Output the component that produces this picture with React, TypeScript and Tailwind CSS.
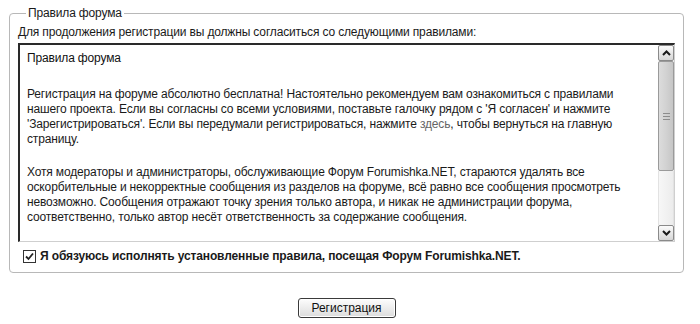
import React from "react";

const font = { fontFamily: '"Liberation Sans", Arial, sans-serif' };

function Chevron({ up }: { up?: boolean }) {
  return (
    <svg width="9" height="6" viewBox="0 0 9 6" className="block">
      <path
        d={up ? "M1 5 L4.5 1.5 L8 5" : "M1 1 L4.5 4.5 L8 1"}
        fill="none"
        stroke="#1a1a1a"
        strokeWidth="2"
      />
    </svg>
  );
}

function ScrollButton({ up }: { up?: boolean }) {
  return (
    <div className="flex h-[16px] w-[16px] items-center justify-center rounded-[2px] border border-[#8a8a8a] bg-gradient-to-b from-[#fbfbfb] to-[#d6d6d6]">
      <Chevron up={up} />
    </div>
  );
}

function Scrollbar() {
  return (
    <div className="flex w-[16px] flex-col bg-[#f4f4f4]">
      <ScrollButton up />
      <div className="flex h-[110px] flex-col items-center justify-center gap-[2px] rounded-[2px] border border-[#9a9a9a] bg-gradient-to-r from-[#dcdcdc] via-[#d2d2d2] to-[#c6c6c6]">
        <div className="h-px w-[7px] bg-[#8d8d8d]" />
        <div className="h-px w-[7px] bg-[#8d8d8d]" />
        <div className="h-px w-[7px] bg-[#8d8d8d]" />
      </div>
      <div className="flex-1 border-x border-[#e2e2e2] bg-gradient-to-r from-[#f7f7f7] to-[#ececec]" />
      <ScrollButton />
    </div>
  );
}

export default function App() {
  return (
    <div className="h-[324px] w-[700px] overflow-hidden bg-white text-[12px] tracking-[-0.15px] text-[#1a1a1a]" style={font}>
      <fieldset className="ml-[9px] mt-[6px] w-[675px] rounded-[4px] border border-[#b8b8b8] px-[8px] pb-[9px]">
        <legend className="ml-[8px] px-[2px] leading-[14px]">Правила форума</legend>

        <div className="mt-[5px] leading-[14px]">
          Для продолжения регистрации вы должны согласиться со следующими правилами:
        </div>

        <div className="mt-[4px] flex h-[199px] w-[657px] border-l-2 border-t-2 border-b border-r border-l-[#2a2a2a] border-t-[#2a2a2a] border-b-[#cfcfcf] border-r-[#cfcfcf] bg-white">
          <div className="flex-1 overflow-hidden whitespace-nowrap pl-[7px] pt-[6px]">
            <div className="leading-[14px] text-[#111]">Правила форума</div>
            <p className="mt-[22px] leading-[15px]">
              Регистрация на форуме абсолютно бесплатна! Настоятельно рекомендуем вам ознакомиться с правилами
              <br />
              нашего проекта. Если вы согласны со всеми условиями, поставьте галочку рядом с 'Я согласен' и нажмите
              <br />
              'Зарегистрироваться'. Если вы передумали регистрироваться, нажмите{" "}
              <span className="text-[#666]">здесь</span>, чтобы вернуться на главную
              <br />
              страницу.
            </p>
            <p className="mt-[18px] leading-[15px]">
              Хотя модераторы и администраторы, обслуживающие Форум Forumishka.NET, стараются удалять все
              <br />
              оскорбительные и некорректные сообщения из разделов на форуме, всё равно все сообщения просмотреть
              <br />
              невозможно. Сообщения отражают точку зрения только автора, и никак не администрации форума,
              <br />
              соответственно, только автор несёт ответственность за содержание сообщения.
            </p>
          </div>
          <Scrollbar />
        </div>

        <label className="ml-[5px] mt-[7px] flex items-center gap-[4px] font-bold leading-[14px] tracking-[-0.12px]">
          <span className="flex h-[13px] w-[13px] items-center justify-center border border-[#333] bg-white">
            <svg width="9" height="9" viewBox="0 0 9 9">
              <path d="M1 4.5 L3.5 7 L8 1.5" fill="none" stroke="#222" strokeWidth="1.8" />
            </svg>
          </span>
          Я обязуюсь исполнять установленные правила, посещая Форум Forumishka.NET.
        </label>
      </fieldset>

      <div className="ml-[9px] mt-[25px] flex w-[675px] justify-center">
        <button className="h-[20px] w-[98px] rounded-[3px] border border-[#3a3a3a] bg-gradient-to-b from-[#fdfdfd] to-[#dcdcdc] text-[12px] leading-[18px] tracking-normal text-[#111] shadow-[inset_0_0_0_1px_#ffffff]">
          Регистрация
        </button>
      </div>
    </div>
  );
}
